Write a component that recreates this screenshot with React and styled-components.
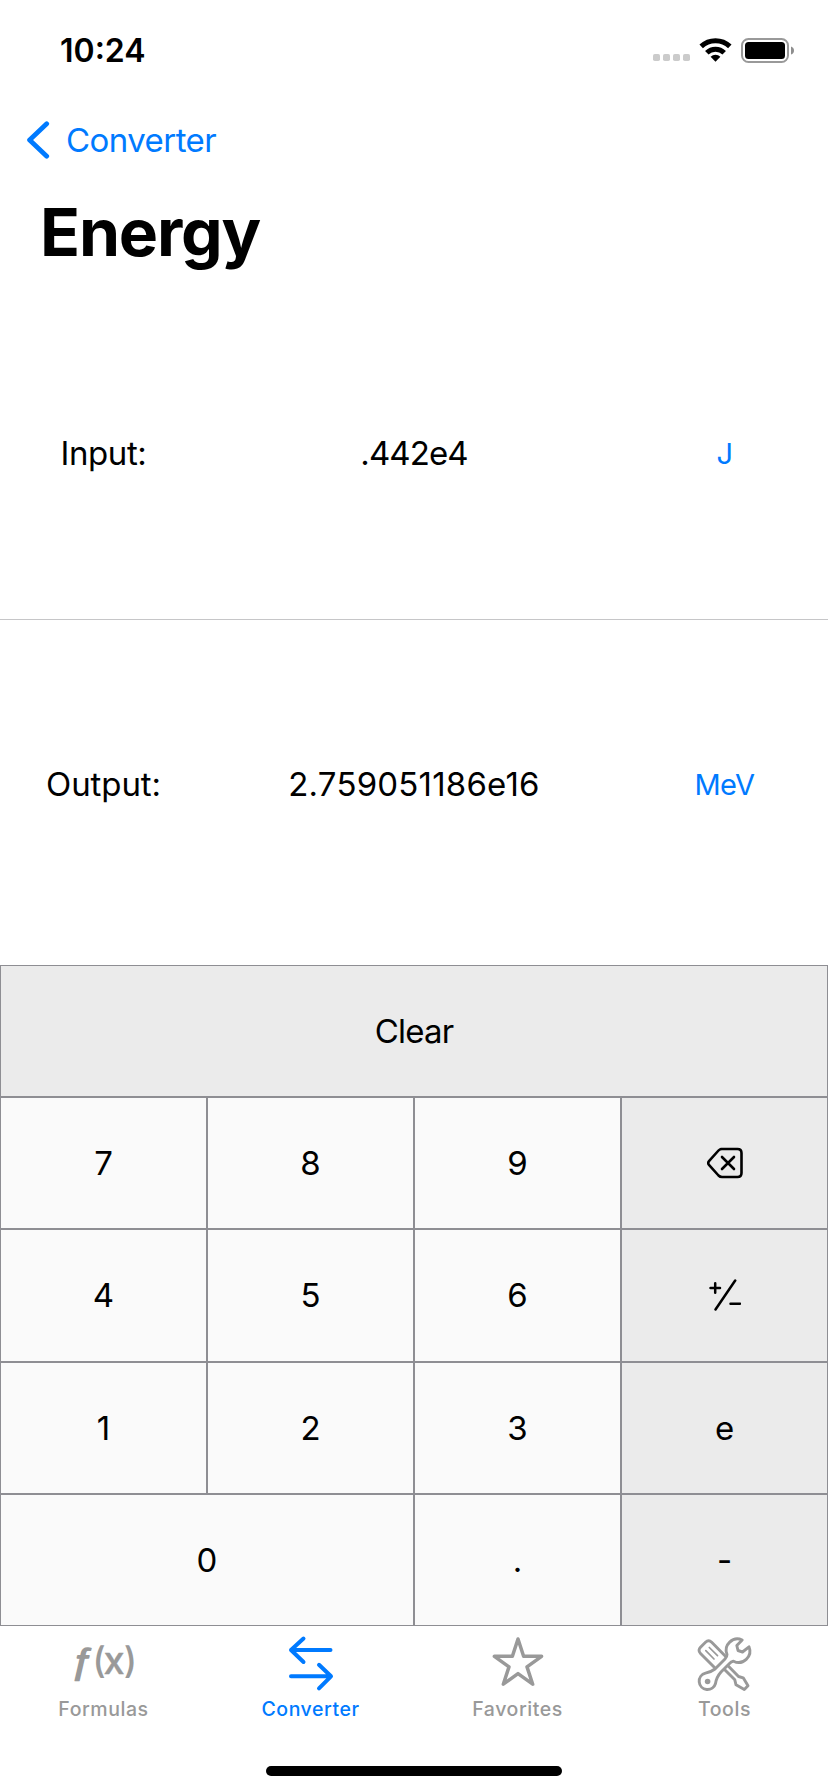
import React from "react";
import styled, { createGlobalStyle } from "styled-components";

const BLUE = "#007aff";
const GRAY = "#999999";
const LINE = "#8e8e93";

const Global = createGlobalStyle`
  * { box-sizing: border-box; }
  body { margin: 0; background: #fff; font-family: Inter, "Liberation Sans", sans-serif; color: #000; }
  button { font: inherit; color: inherit; border: 0; background: none; padding: 0; margin: 0; }
  svg { display: block; }
`;

const Screen = styled.main`
  width: 828px;
  height: 1792px;
  display: flex;
  flex-direction: column;
  overflow: hidden;
  background: #fff;
`;

const StatusBar = styled.header`
  height: 88px;
  padding: 11px 34px 0 60px;
  display: flex;
  align-items: center;
  justify-content: space-between;
`;

const Clock = styled.time`
  padding-top: 1px;
  font-size: 32px;
  font-weight: 600;
  letter-spacing: 0;
`;

const StatusIcons = styled.div`
  display: flex;
  align-items: center;
`;

const NavBar = styled.nav`
  height: 104px;
  padding: 0 26px;
  display: flex;
  align-items: center;
`;

const BackButton = styled.button`
  display: flex;
  align-items: center;
  gap: 16px;
  color: ${BLUE};
  font-size: 33px;
  letter-spacing: -0.55px;
`;

const Title = styled.h1`
  margin: 0;
  height: 96px;
  padding-left: 40px;
  font-size: 66px;
  font-weight: 700;
  line-height: 80px;
  letter-spacing: -1.2px;
`;

const Reading = styled.section`
  height: ${(p) => p.$height}px;
  padding-bottom: ${(p) => p.$lift}px;
  display: grid;
  grid-template-columns: 207px 414px 207px;
  align-items: center;
  justify-items: center;
  font-size: 33px;
  border-bottom: ${(p) => (p.$divided ? "1px solid #c6c6c8" : "0")};
`;

const Label = styled.span`
  letter-spacing: ${(p) => p.$tracking || 0}px;
`;

const Value = styled.output`
  letter-spacing: ${(p) => p.$tracking || 0}px;
`;

const Unit = styled.button`
  color: ${BLUE};
  font-size: 29px;
  letter-spacing: -0.5px;
  padding-top: 2px;
`;

const Keypad = styled.div`
  height: 661px;
  display: grid;
  grid-template-columns: repeat(4, 1fr);
  grid-template-rows: repeat(5, 1fr);
`;

const Key = styled.button`
  grid-column: span ${(p) => p.$span || 1};
  display: flex;
  align-items: center;
  justify-content: center;
  border: 1px solid ${LINE};
  background: ${(p) => (p.$shaded ? "#ebebeb" : "#fafafa")};
  font-size: 33px;
  letter-spacing: ${(p) => (p.$span === 4 ? "-0.8px" : "0")};
`;

const TabBar = styled.footer`
  height: 131px;
  display: grid;
  grid-template-columns: repeat(4, 1fr);
`;

const Tab = styled.button`
  display: flex;
  flex-direction: column;
  align-items: center;
  color: ${(p) => (p.$active ? BLUE : GRAY)};
  font-size: 19.5px;
  font-weight: 500;
  line-height: 26px;
  letter-spacing: 0.55px;
`;

const TabIcon = styled.svg`
  width: 70px;
  height: 70px;
  overflow: visible;
  letter-spacing: 0;
`;

const HomeArea = styled.div`
  flex: 1;
  display: flex;
  justify-content: center;
  padding-top: 9px;
`;

const HomeIndicator = styled.div`
  width: 296px;
  height: 10px;
  border-radius: 5px;
  background: #000;
`;

const StatusGlyphs = () => (
  <svg width="142" height="26" viewBox="0 0 142 26">
    <g fill="#cbcbcb">
      {[1, 11, 21, 31].map((x) => (
        <rect key={x} x={x} y="17" width="7" height="7" rx="1.8" />
      ))}
    </g>
    <g fill="none" stroke="#000" strokeWidth="5">
      <path d="M49.200 9.400a20.600 20.600 0 0 1 28.600 0" />
      <path d="M54.800 15.800a12.500 12.500 0 0 1 17.400 0" />
    </g>
    <path d="M63.500 24.800l-4.900-5a7 7 0 0 1 9.800 0z" />
    <rect x="90" y="2" width="46" height="23" rx="6.5" fill="none" stroke="#999" strokeWidth="2" />
    <rect x="93" y="5" width="40" height="17" rx="3.5" />
    <path d="M139 9.500q3 1 3 4t-3 4z" fill="#8e8e8e" />
  </svg>
);

const BackChevron = () => (
  <svg width="24" height="40" viewBox="0 0 24 40" fill="none" stroke="currentColor" strokeWidth="4.8" strokeLinecap="round" strokeLinejoin="round">
    <path d="M20.700 3.800L3.600 20l17.100 16.200" />
  </svg>
);

const DeleteIcon = () => (
  <svg width="36" height="32" viewBox="0 0 36 32" fill="none" stroke="#000" strokeWidth="2.6" strokeLinecap="round" strokeLinejoin="round">
    <path d="M14 2h16.500q4 0 4 4v20q0 4-4 4H15q-2 0-3.500-1.500L2.200 18.200q-2-2.200 0-4.400L11.500 3.500Q12.800 2 15 2z" />
    <path d="M15 10l12 12M27 10l-12 12" />
  </svg>
);

const PlusMinusIcon = () => (
  <svg width="32" height="32" viewBox="0 0 32 32" fill="none" stroke="#000" strokeWidth="2.5" strokeLinecap="round">
    <path d="M1.500 9h9.500M6.200 4.200v9.600M26.200 1.500L6.500 30.500M21.500 24.700h9.500" />
  </svg>
);

const FunctionIcon = () => (
  <TabIcon viewBox="0 0 70 70" fill="currentColor" stroke="currentColor" strokeLinejoin="round">
    <text transform="translate(0.5 45.500) scale(1.200 1)" fontFamily="Liberation Sans" fontSize="34.500" fontWeight="400" fontStyle="italic" strokeWidth="1.3">ƒ</text>
    <text x="23.500" y="47" fontSize="36" fontWeight="500" stroke="none">(</text>
    <text x="34.500" y="47.500" fontSize="38" fontWeight="500" strokeWidth="0.4">x</text>
    <text x="54.800" y="47" fontSize="36" fontWeight="500" stroke="none">)</text>
  </TabIcon>
);

const ConvertIcon = () => (
  <TabIcon viewBox="0 0 70 70" fill="none" stroke="currentColor" strokeWidth="4" strokeLinecap="round" strokeLinejoin="round">
    <path d="M54.500 24H15M27.500 12.500L15 24l12.500 12M15 50.300h39.500M43 38.800l12 11.500-12 12" />
  </TabIcon>
);

const StarIcon = () => (
  <TabIcon viewBox="0 0 70 70" fill="none" stroke="currentColor" strokeWidth="3.5" strokeLinejoin="round">
    <path d="M35 13l5.600 17.200 18 .1-14.600 10.600 5.700 17.300L35 47.600 20.300 58.200 26 40.900 11.400 30.300l18-.1z" />
  </TabIcon>
);

const ToolsIcon = () => (
  <TabIcon viewBox="0 0 70 70" fill="none" stroke="currentColor" strokeWidth="2.9" strokeLinecap="round" strokeLinejoin="round">
    <path d="M24.500 41.500l-14-14q-3-3.100 0-6.200l5-5q3.100-3 6.200 0L35.700 30.500" />
    <path d="M15.800 24.700l8.200 8.300M19.300 21.500l8.200 8.200" strokeWidth="1.7" />
    <path d="M34.500 43.500l10.300 10.300 1.200 5 8.300 4.800 3.700-3.800-4.800-8-4.700-1.300-10-10.200" />
    <path d="M52.200 14A11.300 11.300 0 0 0 37 28.500Q37 31 35 33L25 43Q21 46 15.500 47.200A8.300 8.300 0 1 0 25.500 57.500Q26.500 51 31 46L39.500 37.500Q41 36 43.500 35.200A11.300 11.300 0 0 0 59 20.800L52.500 26 48 24.500 46.800 19.500z" />
    <circle cx="17.600" cy="55.500" r="2.800" fill="currentColor" stroke="none" />
  </TabIcon>
);

const keys = [
  { label: "Clear", span: 4, shaded: true },
  { label: "7" }, { label: "8" }, { label: "9" }, { label: <DeleteIcon />, shaded: true },
  { label: "4" }, { label: "5" }, { label: "6" }, { label: <PlusMinusIcon />, shaded: true },
  { label: "1" }, { label: "2" }, { label: "3" }, { label: "e", shaded: true },
  { label: "0", span: 2 }, { label: "." }, { label: "-", shaded: true },
];

const tabs = [
  { name: "Formulas", Icon: FunctionIcon },
  { name: "Converter", Icon: ConvertIcon, active: true },
  { name: "Favorites", Icon: StarIcon },
  { name: "Tools", Icon: ToolsIcon },
];

export default function App() {
  return (
    <Screen>
      <Global />
      <StatusBar>
        <Clock>10:24</Clock>
        <StatusIcons><StatusGlyphs /></StatusIcons>
      </StatusBar>
      <NavBar>
        <BackButton><BackChevron />Converter</BackButton>
      </NavBar>
      <Title>Energy</Title>
      <Reading $height={332} $lift={2} $divided>
        <Label $tracking={-0.4}>Input:</Label>
        <Value $tracking={-0.9}>.442e4</Value>
        <Unit>J</Unit>
      </Reading>
      <Reading $height={345} $lift={18}>
        <Label $tracking={-0.1}>Output:</Label>
        <Value $tracking={0.2}>2.759051186e16</Value>
        <Unit>MeV</Unit>
      </Reading>
      <Keypad>
        {keys.map((k, i) => (
          <Key key={i} $span={k.span} $shaded={k.shaded}>{k.label}</Key>
        ))}
      </Keypad>
      <TabBar>
        {tabs.map(({ name, Icon, active }) => (
          <Tab key={name} $active={active}><Icon />{name}</Tab>
        ))}
      </TabBar>
      <HomeArea><HomeIndicator /></HomeArea>
    </Screen>
  );
}
